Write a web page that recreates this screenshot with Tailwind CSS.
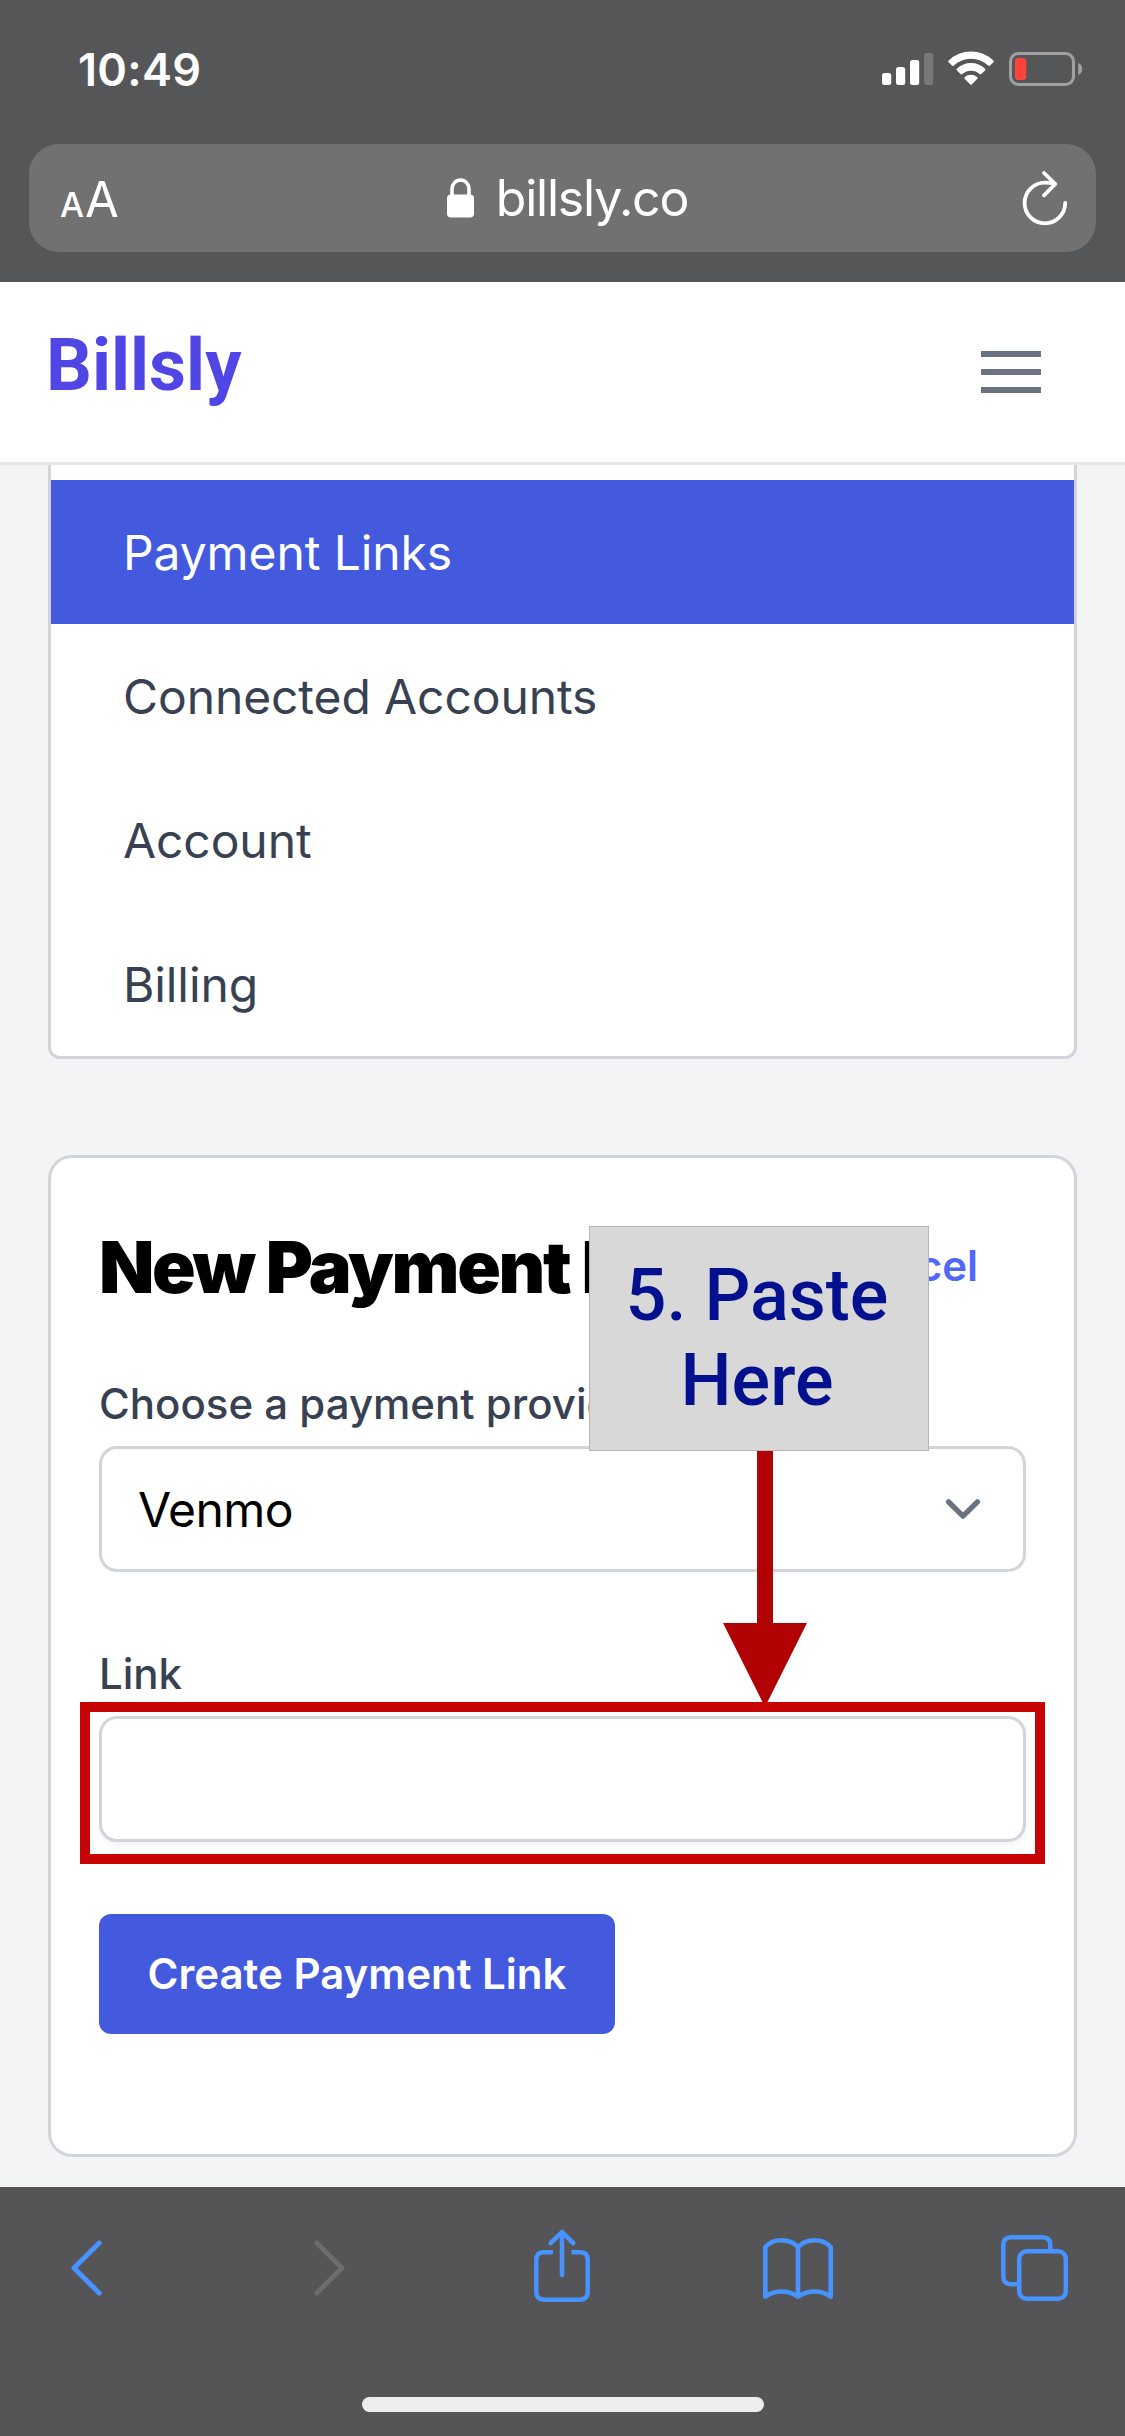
<!DOCTYPE html>
<html lang="en">
<head>
<meta charset="utf-8">
<title>Billsly</title>
<script src="https://cdn.jsdelivr.net/npm/@tailwindcss/browser@4"></script>
</head>
<body class="relative flex h-[2436px] w-[1125px] flex-col overflow-hidden bg-[#f3f4f6] font-['Inter',sans-serif] text-[#374151]">

  <!-- Browser chrome: status bar and address bar -->
  <div class="h-[282px] shrink-0 bg-[#555657] text-white">
    <div class="flex h-[144px] items-center justify-between pr-[42px] pb-[6px] pl-[78px]">
      <span class="text-[45px] leading-none font-semibold tracking-[0.3px]">10:49</span>
      <svg class="h-[40px] w-[202px]" viewBox="881 49 202 40" fill="#fff">
        <rect x="882" y="73" width="9.2" height="12" rx="2.5"/>
        <rect x="896" y="67" width="9.2" height="18" rx="2.5"/>
        <rect x="910" y="60" width="9.2" height="25" rx="2.5"/>
        <rect x="924" y="53" width="9.2" height="32" rx="2.5" fill="#77787a"/>
        <path d="M948.7 60.5a32 32 0 0 1 44.6 0q1 1-.1 2l-3.5 3.2q-.8.6-1.6-.1a24.500 24.500 0 0 0-34.200 0q-.8.7-1.600.1l-3.500-3.200q-1.100-1-.1-2z"/>
        <path d="M956.900 68.700a20.500 20.500 0 0 1 28.200 0q.9.900-.1 1.900l-3.600 3.500q-.8.700-1.700 0a12.800 12.800 0 0 0-17.400 0q-.9.700-1.700 0l-3.600-3.500q-1-1-.1-1.900z"/>
        <path d="M964.800 77a9.500 9.500 0 0 1 12.400 0q1 .8.100 1.700l-5.300 5.600q-1 1-2 0l-5.300-5.600q-.9-.9.1-1.700z"/>
        <rect x="1010.500" y="53.500" width="63" height="31" rx="8" fill="none" stroke="#a0a0a1" stroke-width="3"/>
        <rect x="1015" y="58" width="11.300" height="22" rx="3.500" fill="#ff453a"/>
        <path d="M1078.200 63q4 1.500 4 6t-4 6z" fill="#a0a0a1"/>
      </svg>
    </div>
    <div class="mx-[29px] flex h-[108px] items-center justify-between rounded-[30px] bg-[#717172] pr-[27px] pl-[31px]">
      <div class="flex w-[80px] items-baseline pt-[2px] leading-none">
        <span class="text-[34px] font-medium">A</span>
        <span class="ml-[1px] text-[49px]">A</span>
      </div>
      <div class="flex items-center pl-[5px]">
        <svg class="h-[40px] w-[27px]" viewBox="0 0 27 40">
          <path d="M5 20v-9a8.500 9 0 0 1 17 0v9" fill="none" stroke="#fff" stroke-width="3.600"/>
          <rect y="16.500" width="27" height="23" rx="4" fill="#fff"/>
        </svg>
        <span class="-mr-[1px] ml-[22px] text-[50px] leading-none tracking-[-1.2px]">billsly.co</span>
      </div>
      <svg class="h-[56px] w-[80px]" viewBox="989 171 80 56" fill="none" stroke="#fff" stroke-width="3.800" stroke-linecap="round" stroke-linejoin="round">
        <path d="M1065.200 204a20.300 20.300 0 1 1-20.300-20.300q5 0 10 1M1044 174l11.300 11-11.300 11.300"/>
      </svg>
    </div>
  </div>

  <!-- Site header -->
  <header class="flex h-[183px] shrink-0 items-center justify-between border-b-[3px] border-[#e5e7eb] bg-white pr-[84px] pl-[46px]">
    <div class="mb-[13px] font-['Roboto',sans-serif] text-[72px] leading-none font-bold text-[#4f46e5]">Billsly</div>
    <div class="flex w-[60px] flex-col gap-[12px]">
      <div class="h-[6px] bg-[#6b7280]"></div>
      <div class="h-[6px] bg-[#6b7280]"></div>
      <div class="h-[6px] bg-[#6b7280]"></div>
    </div>
  </header>

  <main class="flex h-[1722px] shrink-0 flex-col gap-[96px] overflow-hidden px-[48px]">
    <!-- Settings navigation, scrolled under the header -->
    <nav class="rounded-b-[12px] border-[3px] border-t-0 border-[#d1d5db] bg-white pt-[15px] text-[48px] tracking-[-0.1px]">
      <a class="flex h-[144px] items-center bg-[#435adf] px-[72px] pt-[2px] text-white">Payment Links</a>
      <a class="flex h-[144px] items-center px-[72px] pt-[2px]">Connected Accounts</a>
      <a class="flex h-[144px] items-center px-[72px] pt-[2px]">Account</a>
      <a class="flex h-[144px] items-center px-[72px] pt-[2px]">Billing</a>
    </nav>

    <!-- New payment link form -->
    <section class="h-[1002px] rounded-[24px] border-[3px] border-[#d1d5db] bg-white px-[48px] pt-[73px]">
      <div class="flex h-[72px] items-center justify-between pr-[48px]">
        <h1 class="text-[72px] leading-[72px] font-black tracking-[-0.032em] whitespace-nowrap text-black">New Payment Link</h1>
        <a class="pb-[2px] text-[42px] leading-[60px] font-semibold text-[#4f68f9]">Cancel</a>
      </div>
      <div class="mt-[71px] h-[60px] text-[42px] leading-[60px] font-medium">Choose a payment provider</div>
      <div class="mt-[12px] flex h-[126px] items-center justify-between rounded-[18px] border-[3px] border-[#d1d5db] bg-white pr-[24px] pl-[36px] text-[48px] text-black">
        <span class="pt-[2px] tracking-[-0.6px]">Venmo</span>
        <svg class="h-[72px] w-[72px]" viewBox="0 0 20 20" fill="none" stroke="#6b7280" stroke-width="1.500" stroke-linecap="round" stroke-linejoin="round"><path d="M6 8l4 4 4-4"/></svg>
      </div>
      <div class="mt-[72px] h-[60px] text-[42px] leading-[60px] font-medium">Link</div>
      <div class="mt-[12px] h-[126px] rounded-[18px] border-[3px] border-[#d1d5db] bg-white shadow-[0_3px_6px_rgba(0,0,0,0.05)]"></div>
      <div class="mt-[72px] flex h-[120px] w-[516px] items-center justify-center rounded-[12px] bg-[#435adf] pb-[2px] text-[42px] font-semibold text-white">Create Payment Link</div>
    </section>
  </main>

  <!-- Browser toolbar -->
  <div class="h-[249px] shrink-0 bg-[#555557]">
    <div class="flex h-[210px] pt-[40px] pl-[71px]">
      <svg class="h-[80px] w-[31px]" viewBox="71 2227 31 80" fill="none" stroke="#4793ff" stroke-width="5" stroke-linecap="round" stroke-linejoin="round"><path d="M99.200 2243L74 2268l25.200 25"/></svg>
      <svg class="ml-[212px] h-[80px] w-[31px]" viewBox="314 2227 31 80" fill="none" stroke="#6c6c6d" stroke-width="5" stroke-linecap="round" stroke-linejoin="round"><path d="M316.800 2243L342 2268l-25.200 25"/></svg>
      <svg class="ml-[189px] h-[80px] w-[56px]" viewBox="534 2227 56 80" fill="none" stroke="#4793ff" stroke-width="4.500">
        <path d="M553 2252.300h-9q-7.700 0-7.700 7.700v32q0 7.700 7.700 7.700h36q7.700 0 7.700-7.700v-32q0-7.700-7.700-7.700h-8.500"/>
        <path d="M562 2275V2233M550.700 2243.200L562 2232l11.300 11.200" stroke-linecap="round" stroke-linejoin="round"/>
      </svg>
      <svg class="ml-[173px] h-[80px] w-[70px]" viewBox="763 2227 70 80" fill="none" stroke="#4793ff" stroke-width="4.600" stroke-linecap="round" stroke-linejoin="round">
        <path d="M798 2247q-6.500-6.700-16.500-6.700t-16.200 6.700v49.700q6.700-5.200 16.200-5.200t16.500 5.200zM798 2247q6.500-6.700 16.500-6.700t16.200 6.700v49.700q-6.700-5.200-16.200-5.200t-16.500 5.200z"/>
      </svg>
      <svg class="ml-[168px] h-[80px] w-[67px]" viewBox="1001 2227 67 80" fill="none" stroke="#4793ff" stroke-width="4.500">
        <path d="M1018 2284.300h-6.700q-8 0-8-8v-31q0-8 8-8h31q8 0 8 8v5"/>
        <rect x="1019.200" y="2251.300" width="46.600" height="47.400" rx="7.500"/>
      </svg>
    </div>
    <div class="mx-auto h-[15px] w-[402px] rounded-full bg-[#eeeeee]"></div>
  </div>

  <!-- Tutorial annotation over the form -->
  <div class="absolute top-[1450px] left-[757px] h-[174px] w-[16px] bg-[#b20304]"></div>
  <svg class="absolute top-[1623px] left-[723px] h-[84px] w-[84px]" viewBox="0 0 84 84"><path d="M0 0h84L42 84z" fill="#b20304"/></svg>
  <div class="absolute top-[1702px] left-[80px] h-[162px] w-[965px] border-[10px] border-[#c80505]"></div>
  <div class="absolute top-[1226px] left-[589px] h-[225px] w-[340px] border border-[#b5b5b5] bg-[#d8d8d8] pt-[26px] pr-[4px] text-center font-['Roboto',sans-serif] text-[72px] leading-[85px] font-medium text-[#04118f]">5. Paste<br>Here</div>
</body>
</html>
